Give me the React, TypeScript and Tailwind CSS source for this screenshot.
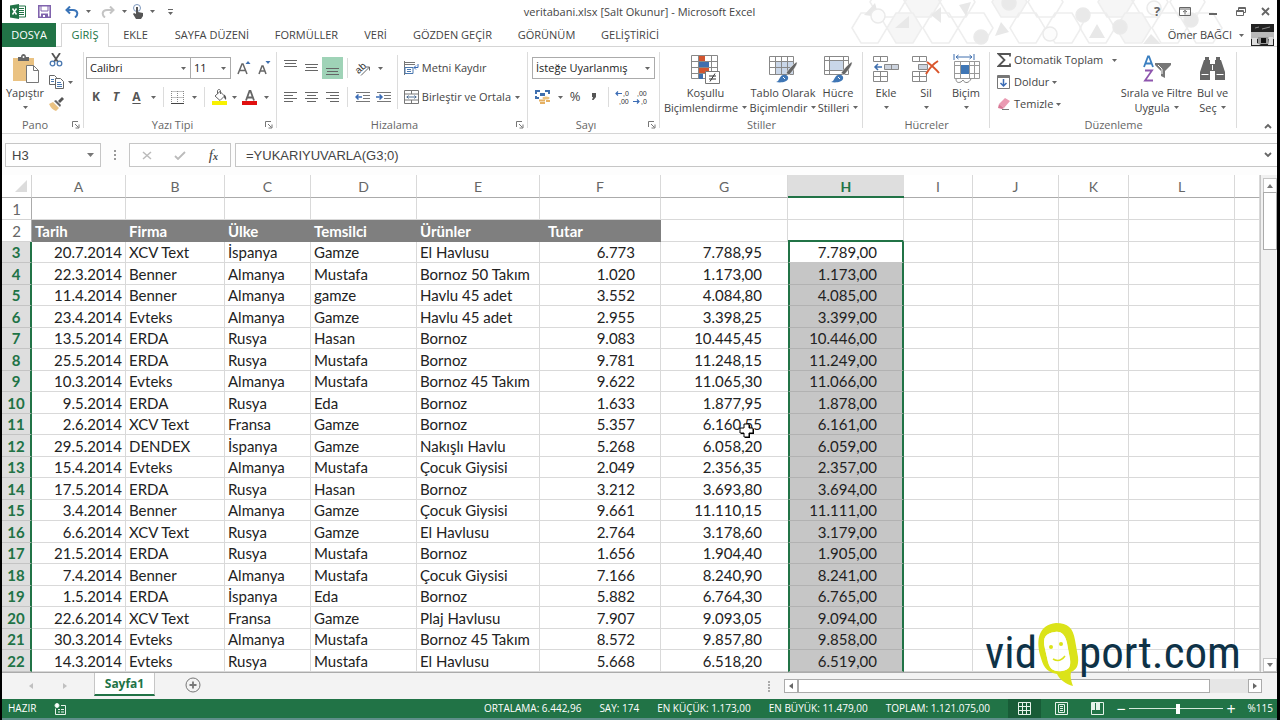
import type { ReactNode } from "react";

const GREEN = "#217346";

const tabs = [
  { name: "EKLE", width: "w-[53px]" },
  { name: "SAYFA DÜZENİ", width: "w-[100px]" },
  { name: "FORMÜLLER", width: "w-[89px]" },
  { name: "VERİ", width: "w-[49px]" },
  { name: "GÖZDEN GEÇİR", width: "w-[105px]" },
  { name: "GÖRÜNÜM", width: "w-[83px]" },
  { name: "GELİŞTİRİCİ", width: "w-[84px]" },
];

const columns = [
  { name: "A", width: "w-[94px]" },
  { name: "B", width: "w-[99px]" },
  { name: "C", width: "w-[86px]" },
  { name: "D", width: "w-[106px]" },
  { name: "E", width: "w-[123px]" },
  { name: "F", width: "w-[121px]" },
  { name: "G", width: "w-[127px]" },
  { name: "H", width: "w-[116px]" },
  { name: "I", width: "w-[69px]" },
  { name: "J", width: "w-[86px]" },
  { name: "K", width: "w-[70px]" },
  { name: "L", width: "w-[106px]" },
  { name: "", width: "" },
];

const rows = [
  ["20.7.2014", "XCV Text", "İspanya", "Gamze", "El Havlusu", "6.773", "7.788,95", "7.789,00"],
  ["22.3.2014", "Benner", "Almanya", "Mustafa", "Bornoz 50 Takım", "1.020", "1.173,00", "1.173,00"],
  ["11.4.2014", "Benner", "Almanya", "gamze", "Havlu 45 adet", "3.552", "4.084,80", "4.085,00"],
  ["23.4.2014", "Evteks", "Almanya", "Gamze", "Havlu 45 adet", "2.955", "3.398,25", "3.399,00"],
  ["13.5.2014", "ERDA", "Rusya", "Hasan", "Bornoz", "9.083", "10.445,45", "10.446,00"],
  ["25.5.2014", "ERDA", "Rusya", "Mustafa", "Bornoz", "9.781", "11.248,15", "11.249,00"],
  ["10.3.2014", "Evteks", "Almanya", "Mustafa", "Bornoz 45 Takım", "9.622", "11.065,30", "11.066,00"],
  ["9.5.2014", "ERDA", "Rusya", "Eda", "Bornoz", "1.633", "1.877,95", "1.878,00"],
  ["2.6.2014", "XCV Text", "Fransa", "Gamze", "Bornoz", "5.357", "6.160,55", "6.161,00"],
  ["29.5.2014", "DENDEX", "İspanya", "Gamze", "Nakışlı Havlu", "5.268", "6.058,20", "6.059,00"],
  ["15.4.2014", "Evteks", "Almanya", "Mustafa", "Çocuk Giysisi", "2.049", "2.356,35", "2.357,00"],
  ["17.5.2014", "ERDA", "Rusya", "Hasan", "Bornoz", "3.212", "3.693,80", "3.694,00"],
  ["3.4.2014", "Benner", "Almanya", "Gamze", "Çocuk Giysisi", "9.661", "11.110,15", "11.111,00"],
  ["6.6.2014", "XCV Text", "Rusya", "Gamze", "El Havlusu", "2.764", "3.178,60", "3.179,00"],
  ["21.5.2014", "ERDA", "Rusya", "Mustafa", "Bornoz", "1.656", "1.904,40", "1.905,00"],
  ["7.4.2014", "Benner", "Almanya", "Mustafa", "Çocuk Giysisi", "7.166", "8.240,90", "8.241,00"],
  ["1.5.2014", "ERDA", "İspanya", "Eda", "Bornoz", "5.882", "6.764,30", "6.765,00"],
  ["22.6.2014", "XCV Text", "Fransa", "Gamze", "Plaj Havlusu", "7.907", "9.093,05", "9.094,00"],
  ["30.3.2014", "Evteks", "Almanya", "Mustafa", "Bornoz 45 Takım", "8.572", "9.857,80", "9.858,00"],
  ["14.3.2014", "Evteks", "Rusya", "Mustafa", "El Havlusu", "5.668", "6.518,20", "6.519,00"],
];

const headings = ["Tarih", "Firma", "Ülke", "Temsilci", "Ürünler", "Tutar"];

const cellAlign = [
  "text-right pr-[3px]",
  "pl-[3px]",
  "pl-[3px]",
  "pl-[3px]",
  "pl-[3px]",
  "text-right pr-[25px]",
  "text-right pr-[26px]",
  "text-right pr-[25px]",
];

function CaretIcon() {
  return (
    <svg width="5" height="3" viewBox="0 0 5 3" className="shrink-0">
      <path d="M0 0h5L2.500 3z" fill="#666" />
    </svg>
  );
}

function Caret({ label }: { label: string }) {
  return (
    <button aria-label={label} className="flex h-[22px] w-3 shrink-0 items-center justify-center">
      <CaretIcon />
    </button>
  );
}

function IconButton({ label, className = "w-5", children }: { label: string; className?: string; children: ReactNode }) {
  return (
    <button aria-label={label} className={`flex h-[22px] shrink-0 items-center justify-center ${className}`}>
      {children}
    </button>
  );
}

function Separator({ className = "" }: { className?: string }) {
  return <div className={`h-5 w-px shrink-0 bg-[#dcdcdc] ${className}`} />;
}

function BigButton({ icon, lines, caret, className = "" }: { icon: ReactNode; lines: string[]; caret?: boolean; className?: string }) {
  return (
    <button className={`flex shrink-0 flex-col items-center pt-[7px] leading-[15px] whitespace-nowrap ${className}`}>
      <span className="mb-px flex h-[30px] items-center">{icon}</span>
      <span>{lines[0]}</span>
      <span className="flex h-[15px] items-center gap-1">
        {lines[1]}
        {caret && <CaretIcon />}
      </span>
    </button>
  );
}

function Group({ label, launcher, width, children }: { label: string; launcher?: boolean; width: string; children: ReactNode }) {
  return (
    <section aria-label={label} className={`relative flex shrink-0 flex-col ${width}`}>
      <div className="flex flex-1">{children}</div>
      <div className="flex h-4 items-center text-[#666]">
        <span className="flex-1 text-center">{label}</span>
        {launcher && (
          <button aria-label={`${label} ayarları`} className="flex w-4 justify-center">
            <svg width="8" height="8" viewBox="0 0 8 8" fill="none" stroke="#777">
              <path d="M.5 6V.5H6M3 3l3.500 3.500M7 3.500V7H3.500" />
            </svg>
          </button>
        )}
      </div>
      <div className="absolute top-[5px] right-0 bottom-[5px] w-px bg-[#dcdcdc]" />
    </section>
  );
}

function Dropdown({ label, value, width }: { label: string; value: string; width: string }) {
  return (
    <label className={`relative flex h-[22px] items-center border border-[#ababab] bg-white ${width}`}>
      <select aria-label={label} className="h-full w-full appearance-none pl-[3px] text-[#222] outline-none">
        <option>{value}</option>
      </select>
      <span className="pointer-events-none absolute right-1">
        <CaretIcon />
      </span>
    </label>
  );
}

/* text lines, each given as [x, width] */
function LinesIcon({ lines, top = 4 }: { lines: number[][]; top?: number }) {
  return (
    <svg width="14" height="16" viewBox="0 0 14 16" stroke="#666">
      {lines.map(([x, w], i) => (
        <path key={i} d={`M${x} ${top + i * 3 + 0.5}h${w}`} />
      ))}
    </svg>
  );
}

function IndentIcon({ right }: { right?: boolean }) {
  return (
    <svg width="16" height="12" viewBox="0 0 16 12" fill="none">
      <path d="M1 1.500h14M8 4.500h7M8 7.500h7M1 10.500h14" stroke="#777" />
      <path d={right ? "M0 6h6M3.500 3.500L6 6 3.500 8.500" : "M7 6H1M3.500 3.500L1 6l2.500 2.500"} stroke="#3b6cb5" strokeWidth="1.500" />
    </svg>
  );
}

function PasteIcon() {
  return (
    <svg width="27" height="30" viewBox="0 0 27 30">
      <path d="M1 4h21v23H1z" fill="#eac282" />
      <path d="M6 7V3h3c0-4 5-4 5 0h3v4z" fill="#666" />
      <circle cx="11.500" cy="3" r="1" fill="#fff" />
      <path d="M14.500 11.500h7l5 5v12h-12z" fill="#fff" stroke="#777" />
      <path d="M21.500 11.500v5h5" fill="none" stroke="#777" />
    </svg>
  );
}

function CutIcon() {
  return (
    <svg width="14" height="14" viewBox="0 0 14 14" fill="none">
      <path d="M3 0l6 9M11 0L5 9" stroke="#555" strokeWidth="1.800" />
      <circle cx="3.500" cy="10.500" r="2.300" stroke="#4a78b0" strokeWidth="1.300" />
      <circle cx="10.500" cy="10.500" r="2.300" stroke="#4a78b0" strokeWidth="1.300" />
    </svg>
  );
}

function CopyIcon() {
  return (
    <svg width="15" height="14" viewBox="0 0 15 14" fill="#fff" stroke="#666">
      <path d="M.5.500h5l2 2v7h-7z" />
      <path d="M2 4.500h3M2 6.500h3" stroke="#4a78b0" />
      <path d="M6.500 3.500h5l3 3v7h-8z" />
      <path d="M8 7.500h4M8 9.500h5M8 11.500h5" stroke="#4a78b0" />
    </svg>
  );
}

function BrushIcon() {
  return (
    <svg width="15" height="14" viewBox="0 0 15 14">
      <path d="M9 4l4-4 2 2-4 4z" fill="#555" />
      <path d="M5 4l2-1 5 5-1 2z" fill="#666" />
      <path d="M0 7l4-2 6 6-3 3c-3-1-5-3-7-7z" fill="#eac282" />
    </svg>
  );
}

function OrientationIcon() {
  return (
    <svg width="18" height="18" viewBox="0 0 18 18">
      <text x="1" y="12" fontSize="10" fill="#333" fontFamily="Liberation Sans, sans-serif" transform="rotate(-42 7 9)">
        ab
      </text>
      <path d="M7 16.500L15.500 8M12 8h3.500v3.500" fill="none" stroke="#666" />
    </svg>
  );
}

function WrapIcon() {
  return (
    <svg width="15" height="14" viewBox="0 0 15 14" fill="none" stroke="#777">
      <path d="M.5 0v14M1 1.500h10M1 3.500h10" />
      <path d="M1 6.500h8v6H1zM3 8.500h4M3 10.500h4" stroke="#4a78b0" />
      <path d="M14 3v3.500h-4M12 4.500l-2 2 2 2" stroke="#3b6cb5" />
    </svg>
  );
}

function MergeIcon() {
  return (
    <svg width="15" height="14" viewBox="0 0 15 14" fill="none" stroke="#777">
      <path d="M.5.500h14v13H.5zM.5 4h14M.5 10h14M7.500.5V4M7.500 10v3.500" />
      <path d="M2.500 7h10M4.500 5.500L3 7l1.500 1.500M10.500 5.500L12 7l-1.500 1.500" stroke="#4a6a90" />
    </svg>
  );
}

function BordersIcon() {
  return (
    <svg width="13" height="13" viewBox="0 0 13 13" fill="none">
      <path d="M.5.500h12M.5 6.500h12M.5 0v12M6.500 0v12M12.500 0v12" stroke="#888" strokeDasharray="1 1" />
      <path d="M0 12.500h13" stroke="#444" />
    </svg>
  );
}

function FillIcon() {
  return (
    <svg width="16" height="16" viewBox="0 0 16 16" fill="none">
      <path d="M3 7l5-4.500 4.500 4.500L8 11.500z" fill="#fff" stroke="#666" />
      <path d="M5.500 5V2c0-2 3-2 3 0v3" stroke="#666" />
      <path d="M12 5.500c2 1 2.500 3 2 5.500-1-1-2-2-2-3z" fill="#555" />
      <path d="M0 12h15v4H0z" fill="#f8f100" />
    </svg>
  );
}

function FontColorIcon() {
  return (
    <svg width="16" height="16" viewBox="0 0 16 16">
      <path d="M4 11.500L7.500 2h1L12 11.500M5.500 8.500h5" fill="none" stroke="#666" strokeWidth="1.800" />
      <path d="M0 12h15v4H0z" fill="#e01010" />
    </svg>
  );
}

function CurrencyIcon() {
  return (
    <svg width="16" height="15" viewBox="0 0 16 15" fill="none">
      <path d="M1 4V1h4M10 1h4v3M1 6v2h3" stroke="#3f6fae" strokeWidth="2" />
      <path d="M5 3h5v3H5z" fill="#3f6fae" />
      <ellipse cx="11" cy="8" rx="3.500" ry="1.500" fill="#eac282" />
      <path d="M4 10.500h6M5 13h5M11 11h4" stroke="#e5b062" strokeWidth="2" />
    </svg>
  );
}

function DecimalIcon({ more }: { more?: boolean }) {
  return (
    <svg width="16" height="18" viewBox="0 0 16 18" fontFamily="Liberation Sans, sans-serif" fontSize="7" fill="#333">
      <text x={more ? 8 : 4} y="8">{more ? ",0" : ",00"}</text>
      <text x={more ? 4 : 8} y="16">{more ? ",00" : ",0"}</text>
      <path
        d={more ? "M7 5.500H1M3 3.500l-2 2 2 2" : "M0 13.500h6M4 11.500l2 2-2 2"}
        fill="none"
        stroke="#3b6cb5"
        strokeWidth="1.200"
      />
    </svg>
  );
}

function ConditionalIcon() {
  return (
    <svg width="29" height="29" viewBox="0 0 29 29">
      <path d="M.5.500h26v23H.5zM.5 6.500h26M.5 12.500h26M.5 18.500h26M7.500.5v23M20.500.5v23" fill="#fff" stroke="#888" />
      <path d="M8 1h6v5H8zM8 13h10v5H8z" fill="#d2552f" />
      <path d="M8 7h10v5H8zM8 19h4v5H8z" fill="#3f6fae" />
      <path d="M14.500 16.500h14v12h-14z" fill="#fff" stroke="#777" />
      <path d="M18 21h7M18 24h7M24 18.500l-5 8" fill="none" stroke="#333" />
    </svg>
  );
}

function TableBrushIcon({ cell }: { cell?: boolean }) {
  return (
    <svg width="29" height="28" viewBox="0 0 29 28">
      <path d="M.5 1.500h24v18H.5z" fill="#fff" />
      <path d={cell ? "M5 5h15v10H5z" : "M7 7h17v12H7z"} fill="#c9d6e8" />
      <path
        d={cell ? "M.5 1.500h24v18H.5zM.5 5.500h24M.5 15.500h24M5.500 1.500v18M19.500 1.500v18" : "M.5 1.500h24v18H.5zM.5 6.500h24M.5 12.500h24M6.500 1.500v18M12.500 1.500v18M18.500 1.500v18"}
        fill="none"
        stroke="#888"
      />
      <path d="M28 7c1 2-4 9-8 13l-3-2c3-4 9-11 11-11z" fill="#666" stroke="#fff" strokeWidth=".5" />
      <path d="M7 27c4-1 3-6 7-7 3-1 6 1 5 4-1 3-7 4-12 3z" fill="#3f76b5" />
      <path d="M14 22l2 2" stroke="#fff" />
    </svg>
  );
}

function InsertIcon() {
  return (
    <svg width="26" height="26" viewBox="0 0 26 26" fill="#fff" stroke="#888">
      <path d="M.5.500h14v5H.5zM7.500.5v5M.5 15.500h14v10H.5zM.5 20.500h14M7.500 15.500v10" />
      <path d="M11.500 8.500h14v5h-14zM18.500 8.500v5" fill="#ccd3de" />
      <path d="M9 11H2M5 8l-3 3 3 3" fill="none" stroke="#3f6fae" strokeWidth="1.500" />
    </svg>
  );
}

function DeleteIcon() {
  return (
    <svg width="28" height="26" viewBox="0 0 28 26" fill="#fff" stroke="#888">
      <path d="M.5.500h14v5H.5zM7.500.5v5M.5 15.500h14v10H.5zM.5 20.500h14M7.500 15.500v10" />
      <path d="M6.500 8.500h9v5h-9z" fill="#ccd3de" />
      <path d="M15 6c4 3 8 6 12 11M26 5c-5 3-9 8-12 13" fill="none" stroke="#d9552b" strokeWidth="2" />
    </svg>
  );
}

function FormatIcon() {
  return (
    <svg width="27" height="30" viewBox="0 0 27 30" fill="none">
      <path d="M1 0v6M21 0v6M3 3h16M5.500 1L3 3l2.500 2M16.500 1L19 3l-2.500 2" stroke="#3f6fae" />
      <path d="M1.500 7.500h25v17h-25zM1.500 11.500h25M1.500 19.500h25M7.500 7.500v17M16.500 7.500v17M21.500 7.500v17" fill="#fff" stroke="#999" />
      <path d="M8 11h8v9H8z" fill="#3f76b5" />
      <path d="M3 25c0 5 5 4 7 1 2 4 6 3 8-1" stroke="#888" />
    </svg>
  );
}

function SortFilterIcon() {
  return (
    <svg width="28" height="28" viewBox="0 0 28 28">
      <path d="M1 12L5 1.500h1L10 12M2.500 8.500h6" fill="none" stroke="#3a7fc0" strokeWidth="1.800" />
      <path d="M2 15.500h7L2 25.500h8" fill="none" stroke="#8e56ae" strokeWidth="1.800" />
      <path d="M12 8h16v2l-6 6v7l-4-2v-5l-6-6z" fill="#777" />
      <path d="M15 10l4 4v5" fill="none" stroke="#fff" />
    </svg>
  );
}

function BinocularsIcon() {
  return (
    <svg width="25" height="24" viewBox="0 0 25 24" fill="#666">
      <path d="M5 0h4v3h1v4h5V3h1V0h4v3h1l4 12v8H15v-9h-5v9H0v-8L4 3h1z" />
      <path d="M1.500 17.500h7M16.500 17.500h7M12.500 8v5" stroke="#fff" />
    </svg>
  );
}

function ViewIcon({ d }: { d: string }) {
  return (
    <svg width="13" height="13" viewBox="0 0 13 13" fill="none" stroke="#e6f3ea">
      <path d={d} />
    </svg>
  );
}

/* faint honeycomb behind the window buttons */
function Honeycomb() {
  const cells = [
    [890, 2, 0], [925, 2, 1], [960, 2, 0], [1012, 2, 1], [1048, 2, 0], [1118, 2, 1], [1153, 2, 0], [1190, 2, 0],
    [872, 28, 0], [907, 28, 1], [943, 28, 0], [978, 28, 0], [1030, 28, 0], [1066, 28, 0], [1100, 28, 0], [1136, 28, 1], [1172, 28, 0], [1207, 28, 0],
  ];
  const dots = [
    [984, 37, 1], [1012, 3, 1], [1053, 34, 0], [1086, 15, 1], [1123, 27, 1], [881, 16, 0], [1157, 8, 0], [1194, 20, 1],
  ];
  return (
    <svg className="pointer-events-none absolute top-0 right-0" width="430" height="46" viewBox="850 0 430 46">
      {cells.map(([x, y, filled], i) => (
        <path
          key={i}
          d={`M${x - 17} ${y}l9-15h17l9 15-9 15h-17z`}
          fill={filled ? "#f6f6f6" : "none"}
          stroke="#eeeeee"
          strokeWidth="1.500"
        />
      ))}
      <path d="M867 15l11-12 4 14zM898 28l14-12v12zM934 15l10-8v16zM962 5l12-3-5 14zM1004 22l8 10-14 4zM1092 38l8-14 8 14zM1146 44l8-10 10 10z" fill="#e8e8e8" />
      {dots.map(([x, y, filled], i) => (
        <circle key={i} cx={x} cy={y} r="7" fill={filled ? "#e9e9e9" : "#fcfcfc"} stroke="#eaeaea" strokeWidth="1.500" />
      ))}
    </svg>
  );
}

function TitleBar() {
  return (
    <header className="relative bg-white">
      <Honeycomb />
      <div className="relative flex h-[23px] items-center">
        <div className="flex flex-1 items-center">
          <svg className="ml-2" width="16" height="15" viewBox="0 0 16 15">
            <path d="M8 2h7.500v11H8z" fill="#fff" stroke={GREEN} />
            <path d="M9 4.500h5M9 6.500h5M9 8.500h5M9 10.500h5" stroke={GREEN} />
            <path d="M0 1.500L9 0v15l-9-1.500z" fill={GREEN} />
            <path d="M2.500 4.500l4 6M6.500 4.500l-4 6" stroke="#fff" strokeWidth="1.500" />
          </svg>
          <IconButton label="Kaydet" className="ml-2 w-5">
            <svg width="13" height="13" viewBox="0 0 13 13" fill="none">
              <path d="M.8.800h11.400v11.400H.8z" fill="#fff" stroke="#8063ad" strokeWidth="1.600" />
              <path d="M3 1v5h7V1" stroke="#8063ad" />
              <path d="M3 8.500h7V12H3z" fill="#8063ad" />
              <path d="M5 10h2v2H5z" fill="#fff" />
            </svg>
          </IconButton>
          <IconButton label="Geri al" className="ml-2 w-5">
            <svg width="14" height="12" viewBox="0 0 14 12" fill="none" stroke="#3a74b8" strokeWidth="2">
              <path d="M5 .5L1.500 4 5 7.500M2 4h6c5 0 5.500 5 2 7.500" />
            </svg>
          </IconButton>
          <Caret label="Geri al listesi" />
          <IconButton label="Yinele" className="ml-1 w-5">
            <svg width="14" height="12" viewBox="0 0 14 12" fill="none" stroke="#c4c4c4" strokeWidth="2">
              <path d="M9 .5L12.500 4 9 7.500M12 4H6C1 4 .5 9 4 11.500" />
            </svg>
          </IconButton>
          <Caret label="Yinele listesi" />
          <IconButton label="Dokunma modu" className="w-4">
            <svg width="12" height="15" viewBox="0 0 12 15">
              <circle cx="5" cy="4" r="3.500" fill="none" stroke="#7d97bd" />
              <path d="M4 3h2v5l5 1v3l-2 3H4L1 10l1-1 2 1z" fill="#555" />
            </svg>
          </IconButton>
          <Caret label="Dokunma modu listesi" />
          <IconButton label="Araç çubuğunu özelleştir" className="ml-1 w-4">
            <svg width="5" height="6" viewBox="0 0 5 6">
              <path d="M0 0h5v1H0zM0 3h5L2.500 6z" fill="#666" />
            </svg>
          </IconButton>
        </div>
        <h1 className="pt-px text-[11px] whitespace-nowrap text-[#444]">veritabani.xlsx [Salt Okunur] - Microsoft Excel</h1>
        <div className="flex flex-1 items-center justify-end text-[#666]">
          <IconButton label="Yardım" className="w-7 text-[13px] font-bold">?</IconButton>
          <IconButton label="Şerit görüntüleme" className="w-7">
            <svg width="12" height="9" viewBox="0 0 12 9" fill="none" stroke="#666">
              <path d="M.5.500h11v8H.5zM.5 2h11M6 7.500v-4M4 5l2-1.500L8 5" />
            </svg>
          </IconButton>
          <IconButton label="Simge durumuna küçült" className="w-7">
            <svg width="8" height="9" viewBox="0 0 8 9"><path d="M0 6h8v2H0z" fill="#666" /></svg>
          </IconButton>
          <IconButton label="Önceki boyut" className="w-7">
            <svg width="10" height="9" viewBox="0 0 10 9" fill="none" stroke="#666">
              <path d="M.5 3.500h7v5h-7zM.5 4.500h7M2.500 3V.5h7v5H8M2.500 1.500h7" />
            </svg>
          </IconButton>
          <IconButton label="Kapat" className="mr-[2px] w-5">
            <svg width="9" height="9" viewBox="0 0 9 9" stroke="#666" strokeWidth="1.800"><path d="M1 1l7 7M8 1L1 8" /></svg>
          </IconButton>
        </div>
      </div>
      <nav className="relative flex h-[24px] text-[11px] whitespace-nowrap text-[#444]">
        <div className="absolute inset-x-0 bottom-0 h-px bg-[#d5d5d5]" />
        <button className="relative h-[24px] w-[54px] bg-[#217346] text-white">DOSYA</button>
        <button className="relative ml-[5px] w-12 border border-b-0 border-[#d5d5d5] bg-white text-[#217346]">GİRİŞ</button>
        {tabs.map((tab) => (
          <button key={tab.name} className={tab.width}>{tab.name}</button>
        ))}
        <button className="ml-auto flex items-center gap-[7px]">
          Ömer BAĞCI
          <CaretIcon />
          <svg width="23" height="23" viewBox="0 0 23 23" className="mr-[3px]">
            <path d="M0 0h23v23H0z" fill="#222" />
            <path d="M0 8h23v7H0z" fill="#b9b9b9" />
            <path d="M1 14h5v5l4 2H1zM18 13h4v8h-5z" fill="#ddd" />
            <path d="M7 13h10v7H7z" fill="#999" />
            <path d="M10 14h5v5h-5z" fill="#111" />
            <path d="M4 4l4-1M11 5l8-2" stroke="#888" />
          </svg>
        </button>
      </nav>
    </header>
  );
}

function Ribbon() {
  return (
    <div className="flex h-[87px] border-b border-[#d5d5d5] bg-white text-[11px] text-[#444]">
      <Group label="Pano" launcher width="w-[82px]">
        <BigButton icon={<PasteIcon />} lines={["Yapıştır", ""]} caret className="w-[46px]" />
        <div className="flex flex-col pt-[2px]">
          <IconButton label="Kes" className="w-4"><CutIcon /></IconButton>
          <div className="flex">
            <IconButton label="Kopyala" className="w-4"><CopyIcon /></IconButton>
            <Caret label="Kopyala listesi" />
          </div>
          <IconButton label="Biçim boyacısı" className="w-4"><BrushIcon /></IconButton>
        </div>
      </Group>

      <Group label="Yazı Tipi" launcher width="w-[193px]">
        <div className="flex flex-col gap-[7px] pt-[10px] pl-[2px]">
          <div className="flex">
            <Dropdown label="Yazı tipi" value="Calibri" width="w-[105px]" />
            <Dropdown label="Yazı boyutu" value="11" width="-ml-px w-[41px]" />
            <IconButton label="Yazı tipini büyüt" className="ml-[2px] w-[21px]">
              <svg width="14" height="15" viewBox="0 0 14 15">
                <path d="M1 13L5 3h1l4 10M2.500 9.500h6" fill="none" stroke="#666" strokeWidth="1.500" />
                <path d="M8.500 3L11 0l2.500 3z" fill="#3f6fae" />
              </svg>
            </IconButton>
            <IconButton label="Yazı tipini küçült" className="w-[21px]">
              <svg width="13" height="15" viewBox="0 0 13 15">
                <path d="M1 13l3-8h1l3 8M2 10h5" fill="none" stroke="#666" strokeWidth="1.500" />
                <path d="M7.500 0L10 3l2.500-3z" fill="#3f6fae" />
              </svg>
            </IconButton>
          </div>
          <div className="flex items-center text-[12px] font-bold text-[#555]">
            <IconButton label="Kalın">K</IconButton>
            <IconButton label="İtalik"><span className="italic">T</span></IconButton>
            <IconButton label="Altı çizili" className="w-[21px]"><span className="underline underline-offset-2">A</span></IconButton>
            <Caret label="Altı çizili listesi" />
            <Separator className="ml-1" />
            <IconButton label="Kenarlıklar" className="ml-[2px] w-[22px]"><BordersIcon /></IconButton>
            <Caret label="Kenarlık listesi" />
            <Separator className="ml-1" />
            <IconButton label="Dolgu rengi" className="ml-[7px]"><FillIcon /></IconButton>
            <Caret label="Dolgu rengi listesi" />
            <IconButton label="Yazı tipi rengi"><FontColorIcon /></IconButton>
            <Caret label="Yazı tipi rengi listesi" />
          </div>
        </div>
      </Group>

      <Group label="Hizalama" launcher width="w-[251px]">
        <div className="flex w-[120px] flex-col gap-[7px] pt-[10px] pl-[3px]">
          <div className="flex items-center">
            <IconButton label="Üste hizala" className="w-[21px]"><LinesIcon lines={[[0, 13], [1, 11], [0, 13]]} top={0} /></IconButton>
            <IconButton label="Ortaya hizala" className="w-[21px]"><LinesIcon lines={[[0, 13], [1, 11], [0, 13]]} top={4} /></IconButton>
            <IconButton label="Alta hizala" className="w-[21px] bg-[#9fd3b7]"><LinesIcon lines={[[0, 13], [1, 11], [0, 13]]} top={8} /></IconButton>
            <Separator className="ml-1" />
            <IconButton label="Yönlendirme" className="ml-1 w-[22px]"><OrientationIcon /></IconButton>
            <Caret label="Yönlendirme listesi" />
          </div>
          <div className="flex items-center">
            <IconButton label="Sola hizala" className="w-[21px]"><LinesIcon lines={[[0, 13], [0, 9], [0, 13], [0, 9]]} top={3} /></IconButton>
            <IconButton label="Ortala" className="w-[21px]"><LinesIcon lines={[[0, 13], [2, 9], [0, 13], [2, 9]]} top={3} /></IconButton>
            <IconButton label="Sağa hizala" className="w-[21px]"><LinesIcon lines={[[0, 13], [4, 9], [0, 13], [4, 9]]} top={3} /></IconButton>
            <Separator className="ml-1" />
            <IconButton label="Girintiyi azalt" className="ml-1 w-[21px]"><IndentIcon /></IconButton>
            <IconButton label="Girintiyi artır" className="w-[21px]"><IndentIcon right /></IconButton>
          </div>
        </div>
        <div className="mt-2 h-[54px] w-px bg-[#dcdcdc]" />
        <div className="flex flex-1 flex-col gap-[7px] pt-[10px] pl-[6px]">
          <button className="flex h-[22px] items-center gap-[3px]"><WrapIcon />Metni Kaydır</button>
          <div className="flex">
            <button className="flex h-[22px] items-center gap-[3px] whitespace-nowrap"><MergeIcon />Birleştir ve Ortala</button>
            <span className="mr-[5px] ml-auto flex"><Caret label="Birleştir listesi" /></span>
          </div>
        </div>
      </Group>

      <Group label="Sayı" launcher width="w-[132px]">
        <div className="flex flex-col gap-[7px] pt-[10px] pl-[4px]">
          <Dropdown label="Sayı biçimi" value="İsteğe Uyarlanmış" width="w-[123px]" />
          <div className="flex items-center">
            <IconButton label="Muhasebe biçimi" className="w-[22px]"><CurrencyIcon /></IconButton>
            <Caret label="Para birimi listesi" />
            <IconButton label="Yüzde stili" className="w-[18px] text-[13px]">%</IconButton>
            <IconButton label="Virgül stili">
              <svg width="4" height="8" viewBox="0 0 4 8"><path d="M0 0h4v4L1.500 7H0l1-3H0z" fill="#555" /></svg>
            </IconButton>
            <Separator className="ml-1" />
            <IconButton label="Ondalık artır" className="ml-[6px]"><DecimalIcon more /></IconButton>
            <IconButton label="Ondalık azalt"><DecimalIcon /></IconButton>
          </div>
        </div>
      </Group>

      <Group label="Stiller" width="w-[203px]">
        <BigButton icon={<ConditionalIcon />} lines={["Koşullu", "Biçimlendirme"]} caret className="ml-[3px] w-[85px]" />
        <BigButton icon={<TableBrushIcon />} lines={["Tablo Olarak", "Biçimlendir"]} caret className="w-[70px]" />
        <BigButton icon={<TableBrushIcon cell />} lines={["Hücre", "Stilleri"]} caret className="w-[40px]" />
      </Group>

      <Group label="Hücreler" width="w-[127px]">
        <BigButton icon={<InsertIcon />} lines={["Ekle", ""]} caret className="ml-[3px] w-10" />
        <BigButton icon={<DeleteIcon />} lines={["Sil", ""]} caret className="w-10" />
        <BigButton icon={<FormatIcon />} lines={["Biçim", ""]} caret className="w-10" />
      </Group>

      <Group label="Düzenleme" width="w-[247px]">
        <div className="flex w-[130px] flex-col pt-[2px] pl-[7px]">
          <button className="flex h-[22px] items-center gap-[3px] whitespace-nowrap">
            <svg width="14" height="14" viewBox="0 0 14 14"><path d="M13 3.500V1H1.500l6 6-6 6H13v-2.500" fill="none" stroke="#555" strokeWidth="1.800" /></svg>
            Otomatik Toplam
            <span className="ml-[6px]"><CaretIcon /></span>
          </button>
          <button className="flex h-[22px] items-center gap-[3px]">
            <svg width="14" height="14" viewBox="0 0 14 14" fill="none">
              <path d="M.5.500h12v13H.5z" fill="#fff" stroke="#777" />
              <path d="M1 1h11v2H1z" fill="#777" />
              <path d="M6.500 4v7M3.500 8l3 3 3-3" stroke="#3b6cb5" strokeWidth="1.500" />
            </svg>
            Doldur
            <CaretIcon />
          </button>
          <button className="flex h-[22px] items-center gap-[3px]">
            <svg width="14" height="14" viewBox="0 0 14 14">
              <path d="M2 7l6-6 5 3-6 7z" fill="#ea9ab2" />
              <path d="M2 7l5 4-2 1-4-1z" fill="#d97896" />
              <path d="M5 12.500h7" stroke="#777" />
            </svg>
            Temizle
            <CaretIcon />
          </button>
        </div>
        <BigButton icon={<SortFilterIcon />} lines={["Sırala ve Filtre", "Uygula"]} caret className="w-[73px]" />
        <BigButton icon={<BinocularsIcon />} lines={["Bul ve", "Seç"]} caret className="w-[39px]" />
      </Group>
      <button aria-label="Şeridi daralt" className="mt-auto mr-[5px] mb-1 ml-auto">
        <svg width="8" height="6" viewBox="0 0 8 6" fill="none" stroke="#666" strokeWidth="1.800"><path d="M1 5l3-3 3 3" /></svg>
      </button>
    </div>
  );
}

function FormulaBar() {
  return (
    <div className="flex bg-[#fdfdfd] pt-[9px] pb-[8px] font-['Liberation_Sans',Arial,sans-serif] text-[13px] text-[#444]">
      <div className="ml-[3px] flex h-[24px] w-[96px] items-center border border-[#c6c6c6] bg-white pr-[6px]">
        <input aria-label="Ad kutusu" defaultValue="H3" className="w-full min-w-0 pt-px pl-[6px] outline-none" />
        <svg width="7" height="4" viewBox="0 0 7 4" className="shrink-0"><path d="M0 0h7L3.500 4z" fill="#777" /></svg>
      </div>
      <svg width="28" height="24" viewBox="0 0 28 24" fill="#999">
        <path d="M13 7h2v2h-2zM13 11h2v2h-2zM13 15h2v2h-2z" />
      </svg>
      <div className="flex h-[24px] w-[102px] items-center justify-around border border-[#c6c6c6] bg-white">
        <IconButton label="İptal">
          <svg width="10" height="9" viewBox="0 0 10 9" stroke="#bbb" strokeWidth="1.500"><path d="M1 1l8 7M9 1L1 8" /></svg>
        </IconButton>
        <IconButton label="Giriş">
          <svg width="12" height="9" viewBox="0 0 12 9" fill="none" stroke="#bbb" strokeWidth="1.800"><path d="M1 5l3 3 7-7" /></svg>
        </IconButton>
        <IconButton label="İşlev ekle">
          <span className="font-['Liberation_Serif',serif] text-[15px] italic">f<span className="text-[10px] font-bold">x</span></span>
        </IconButton>
      </div>
      <div className="ml-1 flex h-[24px] flex-1 items-center border border-r-0 border-[#c6c6c6] bg-white pr-[5px]">
        <input aria-label="Formül çubuğu" defaultValue="=YUKARIYUVARLA(G3;0)" className="w-full pt-px pl-[10px] outline-none" />
        <button aria-label="Formül çubuğunu genişlet">
          <svg width="8" height="6" viewBox="0 0 8 6" fill="none" stroke="#666" strokeWidth="1.800"><path d="M1 1l3 3 3-3" /></svg>
        </button>
      </div>
    </div>
  );
}

function Sheet() {
  return (
    <div className="flex border-b border-[#ababab] bg-white">
      <table className="w-full flex-1 table-fixed border-separate border-spacing-0 border-r border-[#c6c6c6] font-[Lato,sans-serif] text-[15px] leading-[18px] text-[#222]">
        <thead>
          <tr className="h-[23px] text-[14px] text-[#666]">
            <th className="w-[30px] border-r border-b border-[#ababab] border-r-[#d4d4d4] p-0">
              <svg width="12" height="12" viewBox="0 0 12 12" className="ml-auto mr-1"><path d="M12 0v12H0z" fill="#dcdcdc" /></svg>
            </th>
            {columns.map((column) => (
              <th
                key={column.name}
                className={`px-0 pt-[2px] pb-0 ${column.width} ${
                  column.name === "H"
                    ? "border-b-2 border-[#217346] bg-[#dedede] font-bold text-[#217346]"
                    : "border-r border-b border-r-[#d9d9d9] border-b-[#ababab] font-normal"
                }`}
              >
                {column.name}
              </th>
            ))}
          </tr>
        </thead>
        <tbody>
          <tr className="h-[22px]">
            <th className="border-r border-b border-[#d4d4d4] border-r-[#ababab] p-0 font-normal text-[#666]">1</th>
            {columns.map((column) => (
              <td key={column.name} className="border-r border-b border-[#d9d9d9] p-0" />
            ))}
          </tr>
          <tr className="h-[22px]">
            <th className="border-r border-b border-[#d4d4d4] border-r-[#ababab] p-0 font-normal text-[#666]">2</th>
            {headings.map((heading) => (
              <td key={heading} className={`bg-[#7f7f7f] p-0 font-bold text-white ${heading === "Tutar" ? "pl-2" : "pl-[3px]"}`}>
                {heading}
              </td>
            ))}
            {columns.slice(6).map((column) => (
              <td
                key={column.name}
                className={`p-0 ${column.name === "H" ? "border-r border-b-2 border-r-[#d9d9d9] border-b-[#217346]" : "border-r border-b border-[#d9d9d9]"}`}
              />
            ))}
          </tr>
          {rows.map((row, index) => (
            <tr key={index} className="odd:h-[21px] even:h-[22px]">
              <th className="border-r-2 border-b border-r-[#217346] border-b-[#c4c4c4] bg-[#dedede] p-0 font-bold text-[#217346]">{index + 3}</th>
              {row.map((value, i) => (
                <td
                  key={i}
                  className={`p-0 whitespace-nowrap ${cellAlign[i]} ${
                    i === 7
                      ? `border-x-2 border-b border-x-[#217346] ${index === 0 ? "border-b-[#c6c6c6]" : "border-b-[#b2b2b2] bg-[#c6c6c6]"}`
                      : i === 6
                        ? "border-b border-[#d9d9d9]"
                        : "border-r border-b border-[#d9d9d9]"
                  }`}
                >
                  {value}
                </td>
              ))}
              {columns.slice(8).map((column) => (
                <td key={column.name} className="border-r border-b border-[#d9d9d9] p-0" />
              ))}
            </tr>
          ))}
        </tbody>
      </table>
      <div className="flex w-4 flex-col items-end bg-[#f1f1f1] pt-[3px]">
        <button aria-label="Yukarı kaydır" className="flex h-[15px] w-[14px] items-center justify-center border border-[#c6c6c6] bg-white">
          <svg width="6" height="4" viewBox="0 0 6 4"><path d="M0 4h6L3 0z" fill="#777" /></svg>
        </button>
        <div className="-mt-px h-[58px] w-[14px] border border-[#ababab] bg-white" />
        <button aria-label="Aşağı kaydır" className="mt-auto flex h-[14px] w-[14px] items-center justify-center border border-[#c6c6c6] bg-white">
          <svg width="6" height="4" viewBox="0 0 6 4"><path d="M0 0h6L3 4z" fill="#777" /></svg>
        </button>
      </div>
    </div>
  );
}

function SheetTabs() {
  return (
    <div className="flex h-[26px] items-start bg-[#f3f3f3]">
      <div className="flex h-[26px] w-[92px] items-center justify-around px-3">
        <button aria-label="Önceki sayfa"><svg width="4" height="6" viewBox="0 0 4 6"><path d="M4 0v6L0 3z" fill="#c0c0c0" /></svg></button>
        <button aria-label="Sonraki sayfa"><svg width="4" height="6" viewBox="0 0 4 6"><path d="M0 0v6l4-3z" fill="#c0c0c0" /></svg></button>
      </div>
      <button className="h-[23px] w-[61px] border-x border-b-2 border-x-[#c6c6c6] border-b-[#217346] bg-white text-[12px] font-bold text-[#217346]">Sayfa1</button>
      <button aria-label="Yeni sayfa" className="mt-1 ml-[30px]">
        <svg width="16" height="16" viewBox="0 0 16 16" fill="none" stroke="#777">
          <circle cx="8" cy="8" r="7" />
          <path d="M8 4.500v7M4.500 8h7" strokeWidth="1.800" />
        </svg>
      </button>
      <svg className="mt-2 ml-auto" width="2" height="11" viewBox="0 0 2 11" fill="#aaa"><path d="M0 0h2v2H0zM0 3h2v2H0zM0 6h2v2H0zM0 9h2v2H0z" /></svg>
      <div className="mt-[6px] mr-[15px] ml-[14px] flex h-[14px] w-[478px] bg-[#e6e6e6]">
        <button aria-label="Sola kaydır" className="flex w-[14px] items-center justify-center border border-[#ababab] bg-white">
          <svg width="4" height="6" viewBox="0 0 4 6"><path d="M4 0v6L0 3z" fill="#666" /></svg>
        </button>
        <div className="w-[412px] border border-[#ababab] bg-white" />
        <button aria-label="Sağa kaydır" className="ml-auto flex w-[14px] items-center justify-center border border-[#ababab] bg-white">
          <svg width="4" height="6" viewBox="0 0 4 6"><path d="M0 0v6l4-3z" fill="#666" /></svg>
        </button>
      </div>
    </div>
  );
}

function StatusBar() {
  return (
    <footer className="flex h-[21px] items-center border-b-2 border-[#5f8f8a] bg-[#217346] text-[10px] whitespace-nowrap text-white">
      <span className="ml-[6px]">HAZIR</span>
      <svg className="ml-[18px]" width="12" height="12" viewBox="0 0 12 12" fill="none" stroke="#e6f3ea">
        <path d="M1.500 5.500v6h10v-9H7M4 6.500h2M7 6.500h3M4 9h2M7 9h3" />
        <circle cx="3" cy="2.500" r="2" fill="#fff" />
      </svg>
      <div className="ml-auto flex gap-[18px]">
        <span>ORTALAMA: 6.442,96</span>
        <span>SAY: 174</span>
        <span>EN KÜÇÜK: 1.173,00</span>
        <span>EN BÜYÜK: 11.479,00</span>
        <span>TOPLAM: 1.121.075,00</span>
      </div>
      <button aria-label="Normal görünüm" className="ml-[18px] flex h-full w-[33px] items-center justify-center bg-[#185c37]">
        <ViewIcon d="M.5.500h12v12H.5zM4.500.5v12M8.500.5v12M.5 4.500h12M.5 8.500h12" />
      </button>
      <button aria-label="Sayfa düzeni" className="flex w-10 justify-center">
        <ViewIcon d="M.5.500h12v12H.5zM3.500 2.500h6v8h-6zM5 4.500h3M5 6.500h3M5 8.500h3" />
      </button>
      <button aria-label="Sayfa sonu önizleme" className="flex w-8 justify-center">
        <svg width="13" height="13" viewBox="0 0 13 13">
          <path d="M.5.500h12v12H.5z" fill="none" stroke="#e6f3ea" />
          <path d="M1 1h3v7H1zM5 1h4v7H5z" fill="#e6f3ea" />
        </svg>
      </button>
      <button aria-label="Uzaklaştır" className="w-4 text-[16px] leading-none">−</button>
      <input
        type="range"
        aria-label="Yakınlaştırma"
        min={0}
        max={100}
        defaultValue={52}
        className="h-3 w-[94px] appearance-none bg-[linear-gradient(#d5e8dc,#d5e8dc)] bg-[length:100%_1px] bg-center bg-no-repeat [&::-webkit-slider-thumb]:h-[10px] [&::-webkit-slider-thumb]:w-1 [&::-webkit-slider-thumb]:appearance-none [&::-webkit-slider-thumb]:bg-white"
      />
      <button aria-label="Yakınlaştır" className="w-4 text-[16px] leading-none">+</button>
      <span className="mr-1 ml-2 w-[26px] text-right">%115</span>
    </footer>
  );
}

function Watermark() {
  return (
    <div className="pointer-events-none absolute right-9 bottom-[32px] flex items-end font-['Roboto_Condensed',Roboto,sans-serif] text-[45px] leading-[70px] text-[#0e3247]">
      <span>vid</span>
      <svg className="-mx-[2px]" width="46" height="66" viewBox="0 0 46 66">
        <path
          fillRule="evenodd"
          fill="#dbe319"
          d="M21 1c12 0 17 5 19 17l3 17c1 9-2 13-7 15-1 4 0 9 2 14-7-2-13-6-16-12C10 50 8 43 5 33 1 17 4 3 21 1zM20 10c-9 1-13 5-10 17l3 13c2 8 7 10 14 9 7-1 9-4 8-12l-3-16c-2-8-5-12-12-11z"
        />
        <path d="M20 10c-9 1-13 5-10 17l3 13c2 8 7 10 14 9 7-1 9-4 8-12l-3-16c-2-8-5-12-12-11z" fill="#fff" fillOpacity=".7" />
        <circle cx="16" cy="25" r="2" fill="#dbe319" />
        <circle cx="26" cy="22" r="2" fill="#dbe319" />
        <path d="M18 37c5 3 9 1 12-3" fill="none" stroke="#dbe319" strokeWidth="1.500" />
      </svg>
      <span>port.com</span>
    </div>
  );
}

export default function App() {
  return (
    <div className="relative flex min-h-screen flex-col overflow-hidden border-r-[3px] border-l-2 border-black bg-[#f3f3f3] font-['Open_Sans','Noto_Sans',sans-serif]">
      <TitleBar />
      <Ribbon />
      <FormulaBar />
      <Sheet />
      <SheetTabs />
      <StatusBar />
      <Watermark />
      {/* cell cross pointer */}
      <svg className="pointer-events-none absolute top-[422px] left-[736px]" width="17" height="17" viewBox="0 0 17 17">
        <path d="M6 2h5v4h4v5h-4v4H6v-4H2V6h4z" fill="#000" transform="translate(1 1)" />
        <path d="M6 2h5v4h4v5h-4v4H6v-4H2V6h4z" fill="#fff" stroke="#000" />
      </svg>
    </div>
  );
}
